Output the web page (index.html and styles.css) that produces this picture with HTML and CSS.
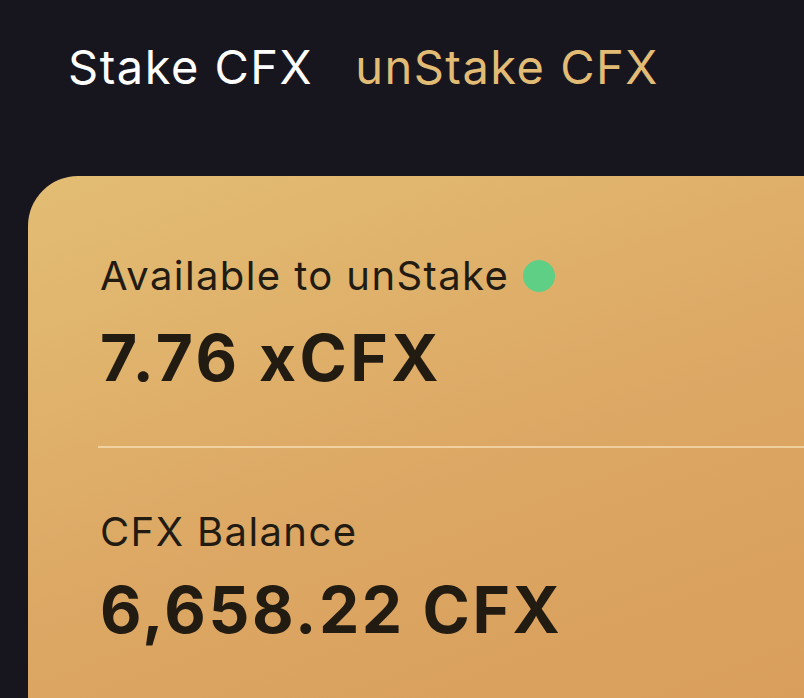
FILE: index.html
```html
<!DOCTYPE html>
<html>
<head>
<meta charset="utf-8">
<link rel="stylesheet" href="styles.css">
</head>
<body>
<div class="page">
  <nav class="tabs">
    <span class="tab tab-active">Stake CFX</span>
    <span class="tab tab-gold">unStake CFX</span>
  </nav>
  <section class="card">
    <div class="stat">
      <div class="label">Available to unStake <span class="dot"></span></div>
      <div class="value">7.76 xCFX</div>
    </div>
    <div class="divider"></div>
    <div class="stat">
      <div class="label">CFX Balance</div>
      <div class="value value-second">6,658.22 CFX</div>
    </div>
  </section>
</div>
</body>
</html>
```
FILE: styles.css
```css
html, body {
  margin: 0;
  padding: 0;
  background: #17161f;
  height: 100%;
  overflow: hidden;
}
.page {
  font-family: Inter, "Noto Sans", sans-serif;
  display: flex;
  flex-direction: column;
  height: 100%;
}
.tabs {
  display: flex;
  gap: 42px;
  padding: 43px 0 0 68px;
  height: 176px;
  box-sizing: border-box;
  flex: none;
}
.tab {
  font-size: 47px;
  font-weight: 400;
  line-height: 1;
  letter-spacing: 1.5px;
}
.tab-active { color: #ffffff; }
.tab-gold { color: #e2bc74; }
.card {
  flex: 1;
  min-height: 0;
  box-sizing: border-box;
  margin-left: 28px;
  border-top-left-radius: 50px;
  background: linear-gradient(160deg, #e3bd74 0%, #dca663 60%, #d99e5b 100%);
  padding: 76px 0 0 72px;
  color: #221b12;
  overflow: hidden;
}
.stat {
  display: flex;
  flex-direction: column;
}
.label {
  font-size: 40px;
  line-height: 48px;
  letter-spacing: 1.4px;
  display: flex;
  align-items: center;
  gap: 14px;
}
.dot {
  width: 32px;
  height: 32px;
  border-radius: 50%;
  background: #5fcf85;
}
.value {
  font-size: 64px;
  font-weight: 700;
  line-height: 80px;
  letter-spacing: 3.4px;
  margin-top: 18px;
}
.value-second {
  margin-top: 14px;
  letter-spacing: 2.6px;
}
.divider {
  height: 2px;
  background: rgba(255, 240, 210, 0.55);
  margin: 48px 0 60px -2px;
}
```
